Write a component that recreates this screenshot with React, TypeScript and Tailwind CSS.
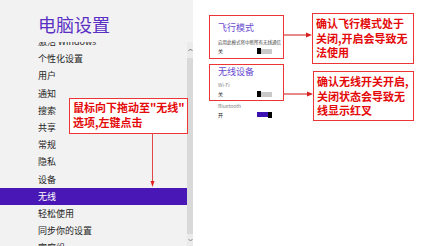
import React from 'react';

const items = ['激活 Windows', '个性化设置', '用户', '通知', '搜索', '共享', '常规', '隐私', '设备', '无线', '轻松使用', '同步你的设置', '家庭组'];

function Toggle({ on }: { on?: boolean }) {
  return on ? (
    <div className="flex h-[6px] w-[15px] items-center">
      <div className="h-[5px] w-[11px] bg-[#3d12b3]" />
      <div className="h-[6px] w-[4px] bg-black" />
    </div>
  ) : (
    <div className="flex h-[6px] w-[15px] items-center">
      <div className="h-[6px] w-[4px] bg-black" />
      <div className="h-[5px] w-[11px] bg-[#c9c9c9]" />
    </div>
  );
}

export default function App() {
  return (
    <div className="relative flex h-[246px] w-[437px] overflow-hidden bg-white font-['Noto_Sans_CJK_SC','Noto_Sans',sans-serif]">
      {/* left panel */}
      <div className="flex h-[246px] w-[193px] flex-col bg-[#f2f2f2]">
        <div className="h-[42px] pl-[38px] pt-[15px] text-[18px] leading-[18px] text-[#5a30c4]">电脑设置</div>
        <div className="flex min-h-0 flex-1">
          <div className="min-w-0 flex-1 overflow-hidden">
            <div className="-mt-[8.8px]">
              {items.map((t) => (
                <div
                  key={t}
                  className={
                    t === '无线'
                      ? 'flex h-[17.2px] items-center bg-[#4917b5] pl-[38px] text-[9px] text-white'
                      : 'flex h-[17.2px] items-center pl-[38px] text-[9px] text-[#262626]'
                  }
                >
                  {t}
                </div>
              ))}
            </div>
          </div>
          <div className="flex w-[6px] flex-col bg-[#ebebeb]">
            <div className="flex h-[16px] items-center justify-center">
              <svg width="5" height="4" viewBox="0 0 5 4">
                <path d="M0.5 3 L2.5 1 L4.5 3" stroke="#777" strokeWidth="1" fill="none" />
              </svg>
            </div>
            <div className="flex-1 bg-[#d9d9d9]" />
            <div className="flex h-[12px] items-center justify-center">
              <svg width="5" height="4" viewBox="0 0 5 4">
                <path d="M0.5 1 L2.5 3 L4.5 1" stroke="#888" strokeWidth="1" fill="none" />
              </svg>
            </div>
          </div>
        </div>
      </div>

      {/* right settings */}
      <div className="flex-1">
        <div className="ml-[16px] w-[75px] pt-[15px]">
          <div className="h-[44px] border border-[#ee3535] px-[8px]">
            <div className="mt-[7px] text-[9px] leading-[10px] text-[#6a4ad0]">飞行模式</div>
            <div className="mt-[6px] whitespace-nowrap text-[4.5px] leading-[6px] text-[#444]">启用此模式将中断所有无线通信</div>
            <div className="mt-[3px] flex h-[6px] items-center">
              <div className="w-[39px] text-[5px] leading-[6px] text-[#222]">关</div>
              <Toggle />
            </div>
          </div>
          <div className="mt-[5px] h-[37px] border border-[#ee3535] px-[8px]">
            <div className="mt-[2px] text-[9px] leading-[10px] text-[#6a4ad0]">无线设备</div>
            <div className="mt-[5px] text-[5px] leading-[6px] text-[#888]">Wi-Fi</div>
            <div className="mt-[3px] flex h-[6px] items-center">
              <div className="w-[39px] text-[5px] leading-[6px] text-[#222]">关</div>
              <Toggle />
            </div>
          </div>
          <div className="pl-[9px]">
            <div className="mt-[2px] text-[5px] leading-[6px] text-[#888]">Bluetooth</div>
            <div className="mt-[2.5px] flex h-[6px] items-center">
              <div className="w-[39px] text-[5px] leading-[6px] text-[#222]">开</div>
              <Toggle on />
            </div>
          </div>
        </div>
      </div>

      {/* annotations */}
      <div className="absolute left-[69px] top-[98px] h-[36px] w-[119px] whitespace-nowrap border border-[#ee3535] bg-white pl-[3px] pt-[0.5px] text-[11px] font-bold leading-[15px] text-[#e40a0a]">
        {'鼠标向下拖动至"无线"'}
        <br />
        选项,左键点击
      </div>
      <svg className="absolute left-[149px] top-[133px]" width="7" height="55" viewBox="0 0 7 55">
        <line x1="3.5" y1="0" x2="3.5" y2="49" stroke="#e24848" strokeWidth="1" />
        <polygon points="1.5,48 3.5,54 5.5,48" fill="#e02020" />
      </svg>

      <div className="absolute left-[312px] top-[13px] h-[51px] w-[102px] whitespace-nowrap border border-[#ee3535] bg-white pl-[3px] pt-[2px] text-[11px] font-bold leading-[14.5px] text-[#e40a0a]">
        确认飞行模式处于
        <br />
        关闭,开启会导致无
        <br />
        法使用
      </div>
      <svg className="absolute left-[283px] top-[31px]" width="30" height="8" viewBox="0 0 30 8">
        <line x1="0" y1="4" x2="24" y2="4" stroke="#d93a3a" strokeWidth="1.2" />
        <polygon points="23,1.5 29,4 23,6.5" fill="#d82020" />
      </svg>

      <div className="absolute left-[313px] top-[71px] h-[50px] w-[101px] whitespace-nowrap border border-[#ee3535] bg-white pl-[3px] pt-[2px] text-[11px] font-bold leading-[14.5px] text-[#e40a0a]">
        确认无线开关开启,
        <br />
        关闭状态会导致无
        <br />
        线显示红叉
      </div>
      <svg className="absolute left-[284px] top-[90px]" width="30" height="8" viewBox="0 0 30 8">
        <line x1="0" y1="4" x2="24" y2="4" stroke="#d93a3a" strokeWidth="1.2" />
        <polygon points="23,1.5 29,4 23,6.5" fill="#d82020" />
      </svg>
    </div>
  );
}
